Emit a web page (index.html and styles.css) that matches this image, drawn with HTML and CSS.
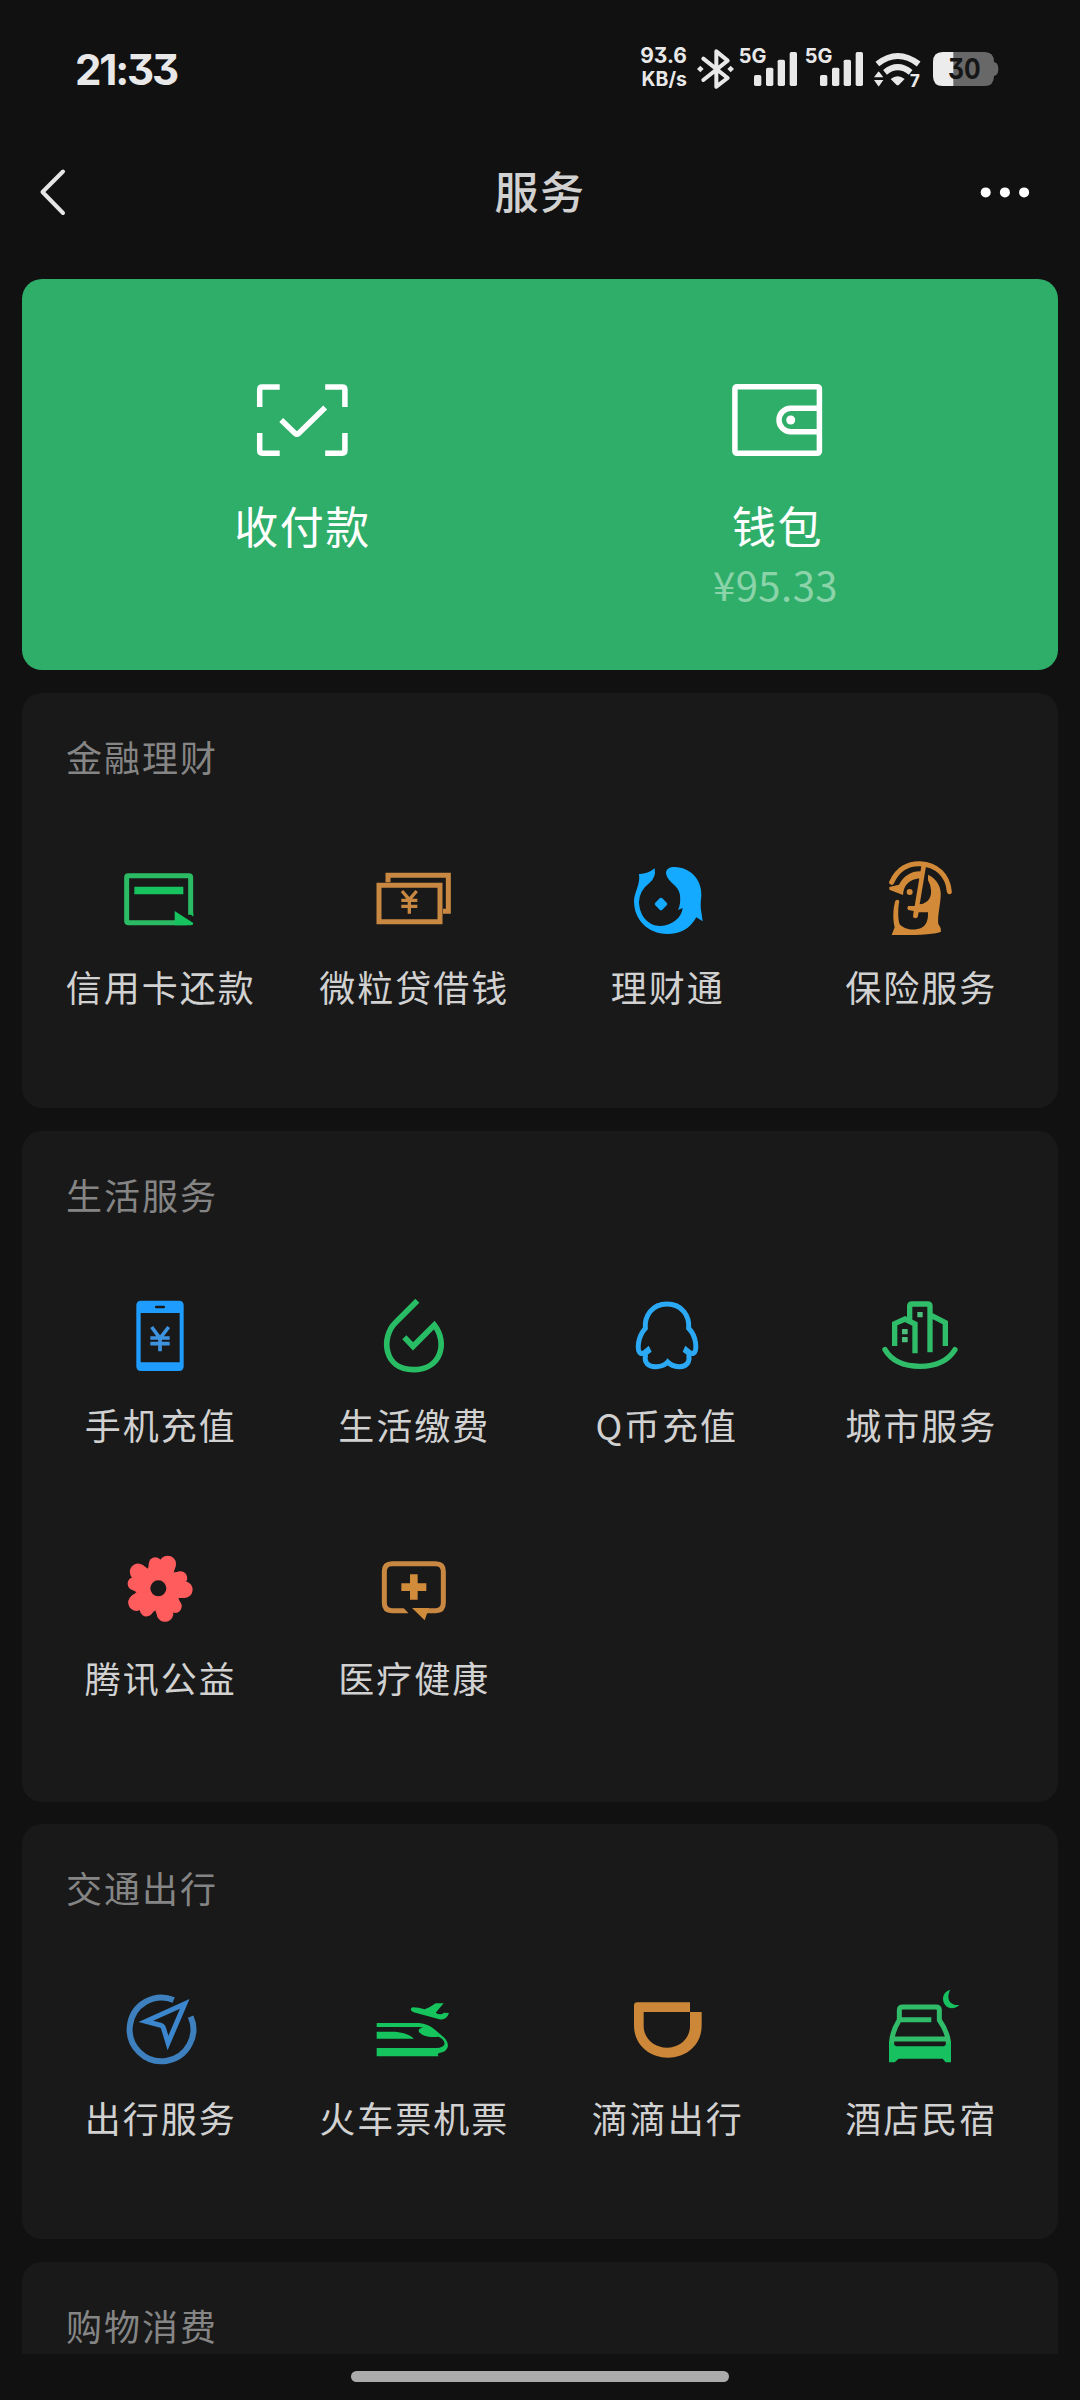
FILE: index.html
```html
<!DOCTYPE html>
<html lang="zh-CN">
<head>
<meta charset="utf-8">
<title>服务</title>
<link rel="stylesheet" href="styles.css">
</head>
<body>
<div class="screen">
  <header class="status">
    <div class="clock">21:33</div>
    <div class="indicators">
      <div class="speed"><span>93.6</span><span>KB/s</span></div>
      <svg width="42" height="80" viewBox="222 0 126 240"><path d="M250 86 323 144 289 170V64L323 92 250 150" fill="none" stroke="#e8e8e8" stroke-width="12" stroke-linejoin="round" stroke-linecap="round"/><path d="M241 107l10 10-10 10-10-10zM332 107l10 10-10 10-10-10z" fill="#e8e8e8"/></svg>
      <svg width="66" height="80" viewBox="348 0 198 240" fill="#e8e8e8"><text x="356" y="100" class="net" textLength="83" lengthAdjust="spacingAndGlyphs">5G</text><rect x="402" y="135" width="22" height="33" rx="5"/><rect x="438" y="113" width="22" height="55" rx="5"/><rect x="473" y="89" width="22" height="79" rx="5"/><rect x="509" y="66" width="22" height="102" rx="5"/></svg>
      <svg width="66" height="80" viewBox="348 0 198 240" fill="#e8e8e8"><text x="356" y="100" class="net" textLength="83" lengthAdjust="spacingAndGlyphs">5G</text><rect x="402" y="135" width="22" height="33" rx="5"/><rect x="438" y="113" width="22" height="55" rx="5"/><rect x="473" y="89" width="22" height="79" rx="5"/><rect x="509" y="66" width="22" height="102" rx="5"/></svg>
      <svg width="58" height="80" viewBox="744 0 174 240" fill="#e8e8e8"><path d="M772 102Q833 54 896 102M795 127Q833 96 872 127" fill="none" stroke="#e8e8e8" stroke-width="18"/><path d="M812 147Q833 131 854 147L837 164Q833 168 829 164ZM762 142 774 126Q776 123 778 126L790 142ZM762 150H790L778 167Q776 170 774 167Z"/><text x="870" y="172" class="gen">7</text></svg>
      <svg width="74" height="80" viewBox="918 0 222 240"><path d="M968 66H1094Q1122 66 1122 96Q1135 98 1135 117Q1135 136 1122 138Q1122 168 1094 168H968Z" fill="#686868"/><path d="M1000 66H968Q939 66 939 96V138Q939 168 968 168H1000Z" fill="#ececec"/><text x="984" y="147" class="level" textLength="98" lengthAdjust="spacingAndGlyphs">30</text></svg>
    </div>
  </header>
  <nav class="navbar">
    <svg width="60" height="60" viewBox="24 162 60 60"><path d="M63 171.500 42.500 192 63 213" fill="none" stroke="#e6e6e6" stroke-width="4" stroke-linecap="round" stroke-linejoin="round"/></svg>
    <h1>服务</h1>
    <svg width="60" height="60" viewBox="974 162 60 60" fill="#fff"><circle cx="985.700" cy="192.400" r="5"/><circle cx="1004.900" cy="192.400" r="5"/><circle cx="1024.100" cy="192.400" r="5"/></svg>
  </nav>
  <main>
    <section class="pay">
      <div class="pay-item">
        <svg width="100" height="90" viewBox="252.800 375 100 90" fill="none" stroke="#fff" stroke-width="5.500"><path d="M279.500 387H262Q259.500 387 259.500 389.500V407M325 387H342Q344.700 387 344.700 389.500V407M279.500 453.200H262Q259.500 453.200 259.500 450.500V433M325 453.200H342Q344.700 453.200 344.700 450.500V433"/><path d="M281 420 295 433.500Q296.700 435 298.400 433.500L325 407.500"/></svg>
        <p class="pay-label">收付款</p>
      </div>
      <div class="pay-item">
        <svg width="100" height="90" viewBox="727.800 375 100 90" fill="none" stroke="#fff" stroke-width="5.500"><rect x="734.700" y="386.700" width="84.500" height="66.600" rx="2"/><path d="M819 408.300H790.500A11.700 11.700 0 0 0 790.500 431.700H819"/><circle cx="790.500" cy="420" r="4.500" fill="#fff" stroke="none"/></svg>
        <p class="pay-label">钱包</p>
        <p class="amount">¥95.33</p>
      </div>
    </section>

    <section class="card">
      <h2>金融理财</h2>
      <div class="grid">
        <div class="item"><svg viewBox="240 84 240 240"><path d="M452 254V142Q452 137 447 137H265Q260 137 260 142V273Q260 278 265 278H440" fill="none" stroke="#2cbb65" stroke-width="15"/><path d="M283 170H430V193H283ZM404 243 460 279Q460 286 453 286H404ZM444 246 460 260V250Z" fill="#16c35f"/></svg><p>信用卡还款</p></div>
        <div class="item"><svg viewBox="1000 84 240 240" fill="none" stroke="#c98842"><path d="M1045 157V136H1226V244H1210" stroke-width="15"/><path d="M1018 166H1201V275H1018Z" stroke-width="15"/><path d="M1087 183 1109 209 1131 183M1109 209V251M1085 211H1133M1085 229H1133" stroke-width="10"/></svg><p>微粒贷借钱</p></div>
        <div class="item"><svg viewBox="201 84 240 240" fill="#14aaff"><path d="M237 132Q262 133 284 115Q289 142 269 158Q238 181 237 217C239 259 265 288 301 288C338 286 365 263 368 234L354 240Q363 223 360 195C356 165 321 157 318 130C318 112 338 108 361 113C401 121 426 157 424 197Q420 230 424 245L428 274L409 262C390 297 360 312 322 312C263 311 222 269 222 213C222 188 242 164 237 132Z"/><path d="M299 205Q303 201 307 205L320 218Q324 222 320 226L307 239Q303 243 299 239L286 226Q282 222 286 218Z"/></svg><p>理财通</p></div>
        <div class="item"><svg viewBox="960 84 240 240" fill="#d28a39"><path d="M995 157C1013 116 1046 100 1080 101C1130 103 1164 136 1168 185" fill="none" stroke="#d28a39" stroke-width="15" stroke-linecap="round"/><path d="M988 171 1017 164C1032 137 1054 123 1083 124V145C1047 147 1031 166 1029 195L988 179ZM1104 134C1132 147 1145 173 1142 200C1140 230 1132 261 1135 282Q1144 293 1143 305Q1121 316 995 315L1004 292C998 267 999 235 1006 212Q1015 205 1018 214C1013 237 1014 269 1019 283C1038 305 1082 302 1094 286Q1105 275 1104 247H1076L1073 262Q1067 267 1059 262L1061 243L1045 240Q1039 234 1045 228H1064L1085 103H1099L1079 223C1109 220 1115 195 1113 180Q1111 162 1104 151Z"/><circle cx="1049" cy="186" r="9"/></svg><p>保险服务</p></div>
      </div>
    </section>

    <section class="card card-tall">
      <h2>生活服务</h2>
      <div class="grid">
        <div class="item"><svg viewBox="240 77 240 240"><path fill-rule="evenodd" d="M303 91H417Q431 91 431 105V288Q431 302 417 302H303Q289 302 289 288V105Q289 91 303 91ZM302 128V276H419V128ZM348 106Q345 106 345 110T348 114H372Q375 114 375 110T372 106Z" fill="#1f9cff"/><path d="M335 170 360 204 386 170M360 203V243M331 203H389M331 220H389" fill="none" stroke="#3d93e0" stroke-width="11"/></svg><p>手机充值</p></div>
        <div class="item"><svg viewBox="1000 77 240 240"><path d="M1133 91 1067 157C1024 199 1030 298 1121 298C1205 298 1225 217 1184 164L1120 228 1094 201" fill="none" stroke="#28bd65" stroke-width="17"/></svg><p>生活缴费</p></div>
        <div class="item"><svg viewBox="201 77 240 240" fill="none" stroke="#2ba9f4" stroke-width="15"><path d="M321 101C276 101 253 137 256 174C232 200 230 242 242 249Q250 252 265 239M321 101C366 101 389 137 386 174C411 200 412 242 400 249Q392 252 377 239"/><path d="M257 253C251 279 266 290 289 289Q312 288 323 275Q335 288 357 289C379 290 391 276 386 253"/><path d="M266 226 275 244 255 259 244 246ZM376 226 368 244 388 259 399 246Z" fill="#2ba9f4" stroke="none"/></svg><p class="q-label">Q币充值</p></div>
        <div class="item"><svg viewBox="960 77 240 240" fill="none" stroke="#2fbd69" stroke-width="16"><path d="M1004 227V160L1035 146 1065 161V249M1049 153V108Q1049 101 1056 101H1103Q1110 101 1110 108V246M1115 136 1156 157V227"/><path d="M975 238C995 272 1031 288 1080 288C1129 288 1164 272 1185 238" stroke-linecap="round"/><path d="M1072 125H1088V141H1072ZM1026 176H1043V192H1026ZM1026 200H1043V216H1026Z" fill="#4cc07b" stroke="none"/></svg><p>城市服务</p></div>
        <div class="item"><svg viewBox="240 56 240 240" fill="#ff5c5d"><defs><g id="petal"><circle cx="346" cy="101" r="20"/><circle cx="383" cy="101" r="25"/><path d="M355 174 322 124 327 100 346 90 383 101 407 106 399 134Z"/></g></defs><circle cx="355" cy="174" r="58"/><use href="#petal"/><use href="#petal" transform="rotate(72 355 174)"/><use href="#petal" transform="rotate(144 355 174)"/><use href="#petal" transform="rotate(216 355 174)"/><use href="#petal" transform="rotate(288 355 174)"/><circle cx="355" cy="174" r="24" fill="#191919"/></svg><p>腾讯公益</p></div>
        <div class="item"><svg viewBox="1000 56 240 240"><path d="M1106 241H1057Q1034 241 1034 218V123Q1034 100 1057 100H1188Q1211 100 1211 123V218Q1211 241 1188 241H1140" fill="none" stroke="#c98842" stroke-width="15"/><path d="M1117 233H1168L1155 270ZM1111 132H1134V159H1160V182H1134V208H1111V182H1085V159H1111Z" fill="#d08b3b"/><path d="M1092 233H1112L1128 250H1108Z" fill="#191919"/></svg><p>医疗健康</p></div>
      </div>
    </section>

    <section class="card">
      <h2>交通出行</h2>
      <div class="grid">
        <div class="item"><svg viewBox="240 86 240 240"><path d="M401 119A95.500 95.500 0 1 0 452 169" fill="none" stroke="#3d80bd" stroke-width="18"/><path d="M434 131 384 248 370 202Q368 197 363 195L318 183Z" fill="none" stroke="#3b86cc" stroke-width="15"/></svg><p>出行服务</p></div>
        <div class="item"><svg viewBox="1000 86 240 240" fill="#16c45d"><path d="M1011 188H1138Q1165 190 1184 207L1207 226Q1228 242 1224 261Q1219 276 1199 278Q1190 281 1197 288H1011V263H1190Q1212 262 1215 250Q1213 235 1196 229C1170 233 1139 225 1137 211Q1137 203 1151 202Q1143 200 1137 200H1011ZM1011 214H1068Q1105 218 1123 235H1011ZM1118 141Q1137 141 1155 147Q1172 141 1188 129L1212 129 1188 157Q1202 166 1213 157L1228 158Q1220 181 1199 177L1122 156Q1107 149 1118 141Z"/></svg><p>火车票机票</p></div>
        <div class="item"><svg viewBox="201 86 240 240"><path fill-rule="evenodd" d="M232 126H390V155H425V196C425 252 381 292 324 292C267 292 222 252 222 196V136Q222 126 232 126ZM251 155V196C251 236 284 262 321 262C358 262 390 236 390 196V155Z" fill="#cc8738"/></svg><p>滴滴出行</p></div>
        <div class="item"><svg viewBox="960 86 240 240"><path d="M1114 178H1018V150Q1018 140 1028 140H1128Q1138 140 1138 150V179Q1163 215 1165 245V285M1018 178Q996 215 995 245V285M1002 236H1160" fill="none" stroke="#31bc69" stroke-width="15"/><path d="M987 240 1008 258H1152L1173 240V306H1157L1148 295H1016L1004 306H987ZM1171 88C1156 116 1171 137 1198 134C1175 155 1148 139 1149 113Q1151 93 1171 88Z" fill="#17c160"/></svg><p>酒店民宿</p></div>
      </div>
    </section>

    <section class="card">
      <h2>购物消费</h2>
    </section>
  </main>
  <footer class="gesture"><div class="pill"></div></footer>
</div>
</body>
</html>
```
FILE: styles.css
```css
* { box-sizing: border-box; }
body, h1, h2, p { margin: 0; }
body {
  background: #111;
  color: #d1d1d1;
  font-family: "Noto Sans CJK SC", sans-serif;
}
svg { display: block; flex: none; }

.screen {
  width: 1080px;
  height: 2400px;
  display: flex;
  flex-direction: column;
  overflow: hidden;
}

.status {
  height: 140px;
  flex: none;
  display: flex;
  justify-content: space-between;
  padding: 30px 80px 0 75px;
  font-family: Inter, sans-serif;
  font-feature-settings: "cv09";
}
.clock {
  height: 80px;
  line-height: 79px;
  font-size: 42px;
  font-weight: 700;
  letter-spacing: -2.200px;
  color: #e8e8e8;
}
.indicators { display: flex; }
.speed {
  display: flex;
  flex-direction: column;
  align-items: flex-end;
  padding: 14px 7px 0 0;
  font-size: 21px;
  font-weight: 700;
  line-height: 24px;
  color: #e8e8e8;
}
.speed span:last-child { font-size: 19.500px; line-height: 23px; }
.net { font-size: 62px; font-weight: 700; }
.gen { font-size: 50px; font-weight: 800; }
.level { font-size: 84px; font-weight: 700; fill: #161616; }

.navbar {
  height: 139px;
  flex: none;
  display: flex;
  justify-content: space-between;
  padding: 22px 46px 0 24px;
}
h1 {
  font-size: 44px;
  line-height: 56px;
  font-weight: 500;
  letter-spacing: 1.500px;
  transform: translateX(11px);
}

main {
  height: 2075px;
  flex: none;
  overflow: hidden;
  display: flex;
  flex-direction: column;
  gap: 22.700px;
  padding: 0 22px;
}

.pay {
  height: 391.300px;
  flex: none;
  display: grid;
  grid-template-columns: 1fr 1fr;
  padding: 96px 43px 0;
  border-radius: 20px;
  background: #2fae6a;
  color: #fff;
}
.pay-item { display: flex; flex-direction: column; align-items: center; }
.pay-label {
  margin-top: 30px;
  font-size: 44px;
  line-height: 60px;
  letter-spacing: 1.500px;
}
.amount {
  margin-top: -1px;
  font-size: 40px;
  line-height: 60px;
  letter-spacing: 0.500px;
  color: #8bd3a9;
  transform: translateX(-2px);
}

.card {
  flex: none;
  padding: 38px 11px 95px;
  border-radius: 20px;
  background: #191919;
}
.card-tall { padding-bottom: 98px; }
h2 {
  padding-left: 33px;
  font-size: 36px;
  line-height: 50px;
  font-weight: 400;
  letter-spacing: 2px;
  color: #858585;
}
.grid {
  display: grid;
  grid-template-columns: repeat(4, 1fr);
  row-gap: 98px;
  margin-top: 77px;
}
.item { display: flex; flex-direction: column; align-items: center; }
.item svg { width: 80px; height: 80px; }
.item p {
  margin: 23px 0 2px;
  padding-left: 2px;
  font-size: 36px;
  line-height: 50px;
  letter-spacing: 2px;
  white-space: nowrap;
}
.item .q-label { padding-left: 0; }

.gesture {
  flex: 1;
  display: flex;
  justify-content: center;
  padding-top: 17px;
}
.pill { width: 378px; height: 11px; border-radius: 6px; background: #ababab; }
```
